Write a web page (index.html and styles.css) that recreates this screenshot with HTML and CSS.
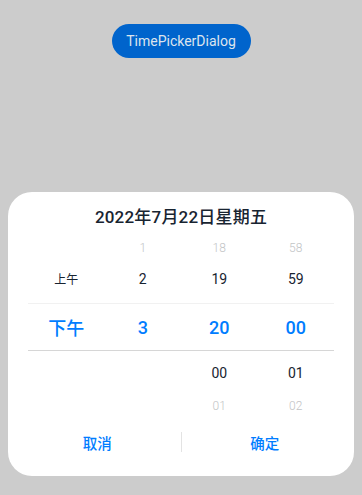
FILE: index.html
```html
<!DOCTYPE html>
<html lang="zh">
<head>
<meta charset="utf-8">
<title>TimePickerDialog</title>
<link rel="stylesheet" href="styles.css">
</head>
<body>
<div class="page">
  <button class="open-btn">TimePickerDialog</button>
</div>
<div class="mask">
  <div class="dialog">
    <div class="title">2022年7月22日星期五</div>
    <div class="picker">
      <div class="row r1 faded"><span></span><span>1</span><span>18</span><span>58</span></div>
      <div class="row r2 normal"><span class="ampm">上午</span><span>2</span><span>19</span><span>59</span></div>
      <div class="row sel"><span>下午</span><span>3</span><span>20</span><span>00</span></div>
      <div class="row r4 normal"><span></span><span></span><span>00</span><span>01</span></div>
      <div class="row r5 faded"><span></span><span></span><span>01</span><span>02</span></div>
    </div>
    <div class="actions">
      <button class="act">取消</button>
      <i class="sep"></i>
      <button class="act">确定</button>
    </div>
  </div>
</div>
</body>
</html>
```
FILE: styles.css
```css
html, body {
  margin: 0;
  padding: 0;
  height: 100%;
}
body {
  background: #cccccc;
  font-family: Roboto, "Noto Sans CJK SC", sans-serif;
  color: #182431;
}
.page {
  display: flex;
  justify-content: center;
  padding-top: 24px;
}
.open-btn {
  width: 139px;
  height: 34px;
  border: none;
  border-radius: 17px;
  background: #0064cc;
  color: #dde4ee;
  font-family: Roboto, "Noto Sans CJK SC", sans-serif;
  font-size: 14px;
  padding: 0;
}
.mask {
  position: fixed;
  inset: 0;
  display: flex;
  align-items: flex-end;
  padding: 0 8px 19px;
}
.dialog {
  flex: 1;
  background: #ffffff;
  border-radius: 24px;
  padding: 12px 0 14px;
}
.title {
  height: 26px;
  line-height: 26px;
  text-align: center;
  font-size: 17px;
  font-weight: 500;
  letter-spacing: 0.2px;
  color: #182431;
}
.picker {
  margin: 2px 20px 0;
}
.row {
  display: grid;
  grid-template-columns: repeat(4, 1fr);
  align-items: center;
  text-align: center;
}
.faded {
  font-size: 12px;
  font-weight: 300;
  color: #c2c4c6;
}
.normal {
  font-size: 14px;
  color: #182431;
}
.ampm {
  font-size: 12px;
}
.r1 { height: 32px; }
.r2 { height: 29px; margin-bottom: 10px; }
.sel {
  box-sizing: border-box;
  height: 48px;
  border-top: 1px solid #f1f1f1;
  border-bottom: 1px solid #d6d6d6;
  font-size: 18px;
  font-weight: 500;
  color: #007dff;
}
.r4 { height: 44px; }
.r5 { height: 22px; }
.actions {
  margin-top: 5px;
  height: 40px;
  display: flex;
  align-items: center;
  padding: 0 6px;
}
.act {
  flex: 1;
  height: 40px;
  border: none;
  background: transparent;
  font-family: Roboto, "Noto Sans CJK SC", sans-serif;
  font-size: 14.5px;
  font-weight: 500;
  color: #007dff;
  padding: 0;
}
.sep {
  width: 1px;
  height: 20px;
  background: #e3e3e3;
}
```
